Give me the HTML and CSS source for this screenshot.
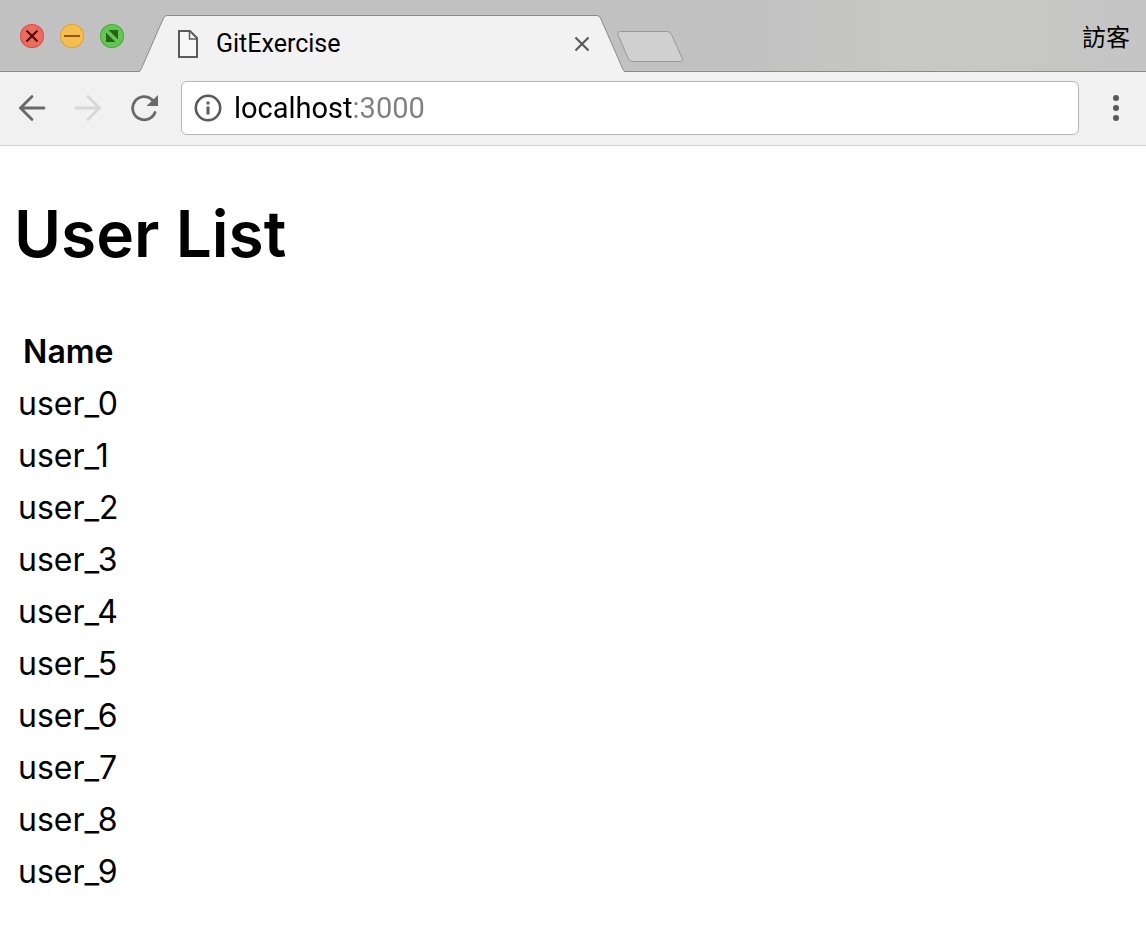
FILE: index.html
```html
<!DOCTYPE html>
<html lang="en">
<head>
<meta charset="utf-8">
<meta name="viewport" content="width=device-width, initial-scale=1">
<title>GitExercise</title>
<link rel="stylesheet" href="styles.css">
</head>
<body>
<header class="browser">
  <div class="strip">
    <div class="lights">
      <button class="light light-close" aria-label="Close window"><svg viewBox="0 0 24 24"><path d="M6.500 6.500l11 11M17.500 6.500l-11 11" stroke="#4d0b07" stroke-width="2"/></svg></button>
      <button class="light light-min" aria-label="Minimize window"><svg viewBox="0 0 24 24"><path d="M4 12h16" stroke="#985712" stroke-width="2"/></svg></button>
      <button class="light light-full" aria-label="Full screen"><svg viewBox="0 0 24 24"><path d="M8.500 6H18v9.500zM6 8.500V18h9.500z" fill="#2a6218"/></svg></button>
    </div>
    <div class="tab">
      <svg class="slope" viewBox="0 0 28 57"><path d="M0 57L1.500 55 24.500 3Q26 .500 28 .500V57z" fill="#f2f2f2"/><path d="M0 56.500Q1.500 56 2 54.500L24.500 3Q26 .500 28 .500" fill="none" stroke="#898989"/></svg>
      <div class="tab-body">
        <svg class="page-icon" viewBox="0 0 22 28"><path d="M2 1h11l7 7v19H2z" fill="#f7f7f7" stroke="#5b5b5b" stroke-width="2"/><path d="M12.500 1v8H20" fill="none" stroke="#5b5b5b" stroke-width="1.500"/></svg>
        <span class="tab-title">GitExercise</span>
        <button class="tab-close" aria-label="Close tab"><svg viewBox="0 0 16 16"><path d="M1.500 1.500l13 13M14.500 1.500l-13 13" stroke="#5a5a5a" stroke-width="2.200"/></svg></button>
      </div>
      <svg class="slope" viewBox="0 0 28 57"><path d="M28 57L26.500 55 3.500 3Q2 .500 0 .500V57z" fill="#f2f2f2"/><path d="M28 56.500Q26.500 56 26 54.500L3.500 3Q2 .500 0 .500" fill="none" stroke="#898989"/></svg>
    </div>
    <button class="new-tab" aria-label="New tab"><svg viewBox="0 0 68 34"><path d="M5 2.500H51Q54 2.500 55.500 5.500L66 29Q67.500 32.500 64 32.500H17Q14 32.500 12.500 30L2 6Q1 2.500 5 2.500z" fill="#d0d0d0" stroke="#999"/></svg></button>
    <button class="guest" lang="zh-Hant">訪客</button>
  </div>
  <nav class="toolbar">
    <button class="tool" aria-label="Back"><svg viewBox="0 0 28 28"><path d="M26 14H3M14 2.500L2.500 14 14 25.500" fill="none" stroke="#696969" stroke-width="2.800" stroke-linecap="round"/></svg></button>
    <button class="tool" aria-label="Forward" disabled><svg viewBox="0 0 28 28"><path d="M2 14h23M14 2.500L25.500 14 14 25.500" fill="none" stroke="#d7d7d7" stroke-width="2.800" stroke-linecap="round"/></svg></button>
    <button class="tool" aria-label="Reload"><svg viewBox="0 0 28 28"><path d="M22.500 6A11.600 11.600 0 1 0 25 18.500" fill="none" stroke="#696969" stroke-width="2.800" stroke-linecap="round"/><path d="M28 1v11H16.500z" fill="#696969"/></svg></button>
    <label class="address">
      <svg class="info" viewBox="0 0 28 28"><circle cx="14" cy="14" r="12.200" fill="none" stroke="#5a5a5a" stroke-width="2.600"/><path d="M14 7.500v3M14 12.500v8" stroke="#5a5a5a" stroke-width="3"/></svg>
      <input class="url" type="text" value="localhost:3000" aria-label="Address">
    </label>
    <button class="menu" aria-label="Menu"><svg viewBox="0 0 8 28"><g fill="#5a5a5a"><circle cx="4" cy="4" r="3"/><circle cx="4" cy="14" r="3"/><circle cx="4" cy="24" r="3"/></g></svg></button>
  </nav>
</header>
<main class="content">
  <h1 class="title">User List</h1>
  <table class="users">
    <thead><tr><th scope="col">Name</th></tr></thead>
    <tbody>
      <tr><td>user_0</td></tr>
      <tr><td>user_1</td></tr>
      <tr><td>user_2</td></tr>
      <tr><td>user_3</td></tr>
      <tr><td>user_4</td></tr>
      <tr><td>user_5</td></tr>
      <tr><td>user_6</td></tr>
      <tr><td>user_7</td></tr>
      <tr><td>user_8</td></tr>
      <tr><td>user_9</td></tr>
    </tbody>
  </table>
</main>
</body>
</html>
```
FILE: styles.css
```css
* { box-sizing: border-box; }
body {
  margin: 0;
  background: #fff;
  color: #000;
  font-family: Inter, "Noto Sans CJK TC", sans-serif;
}
button {
  padding: 0;
  border: 0;
  background: none;
  color: inherit;
  font: inherit;
}
svg { display: block; }
.strip {
  display: flex;
  height: 72px;
  background: linear-gradient(#898989, #898989) bottom / 100% 1px no-repeat,
    linear-gradient(90deg, #c1c1c1 65%, #c8c8c6 80%, #c5c5c5);
}
.lights {
  display: flex;
  gap: 16px;
  padding: 24px 15px 0 20px;
}
.light {
  width: 24px;
  height: 24px;
  border-radius: 50%;
}
.light svg { width: 24px; height: 24px; }
.light-close { background: #ed6a5f; box-shadow: inset 0 0 0 1px #d9544a; }
.light-min { background: #f6be50; box-shadow: inset 0 0 0 1px #dba23b; }
.light-full { background: #62c655; box-shadow: inset 0 0 0 1px #4fab42; }
.tab {
  display: flex;
  flex: 0 1 486px;
  padding-top: 15px;
}
.slope {
  flex: none;
  width: 28px;
  height: 57px;
}
.tab-body {
  display: flex;
  flex: 1;
  align-items: center;
  padding: 0 7px 0 10px;
  border-top: 1px solid #898989;
  background: #f2f2f2;
}
.page-icon { width: 22px; height: 28px; }
.tab-title {
  flex: 1;
  margin-left: 17px;
  padding-bottom: 2px;
  font-family: Roboto, sans-serif;
  font-size: 25px;
}
.tab-close svg { width: 16px; height: 16px; }
.new-tab {
  align-self: flex-start;
  margin: 29px 0 0 -9px;
}
.new-tab svg { width: 68px; height: 34px; }
.guest {
  align-self: flex-start;
  margin: 18px 16px 0 auto;
  font-family: "Noto Sans CJK TC", sans-serif;
  font-size: 24px;
  line-height: 36px;
}
.toolbar {
  display: flex;
  align-items: center;
  gap: 28px;
  height: 74px;
  padding: 0 26px 2px 18px;
  border-bottom: 1px solid #d1d1d1;
  background: #f1f1f1;
}
.tool svg { width: 28px; height: 28px; }
.address {
  display: flex;
  flex: 1;
  align-items: center;
  gap: 12px;
  height: 54px;
  margin: 0 5px 0 -5px;
  padding: 0 12px;
  border: 1px solid #b6b6b6;
  border-radius: 6px;
  background: #fff;
}
.info { flex: none; width: 28px; height: 28px; }
.url {
  flex: 1;
  min-width: 0;
  height: 40px;
  padding: 0;
  border: 0;
  outline: 0;
  background: linear-gradient(90deg, #000 118px, #808080 118px);
  background-clip: text;
  color: transparent;
  font-family: Roboto, sans-serif;
  font-size: 29px;
}
.menu svg { width: 8px; height: 28px; }
.content { padding: 48px 14px; }
.title {
  margin: 0;
  font-size: 64px;
  font-weight: 600;
  line-height: 80px;
}
.users {
  margin-top: 50px;
  border-collapse: separate;
  border-spacing: 0 4px;
  font-size: 32px;
  line-height: 44px;
}
.users th,
.users td { padding: 2px 4px; }
.users th { font-weight: 600; }
```
